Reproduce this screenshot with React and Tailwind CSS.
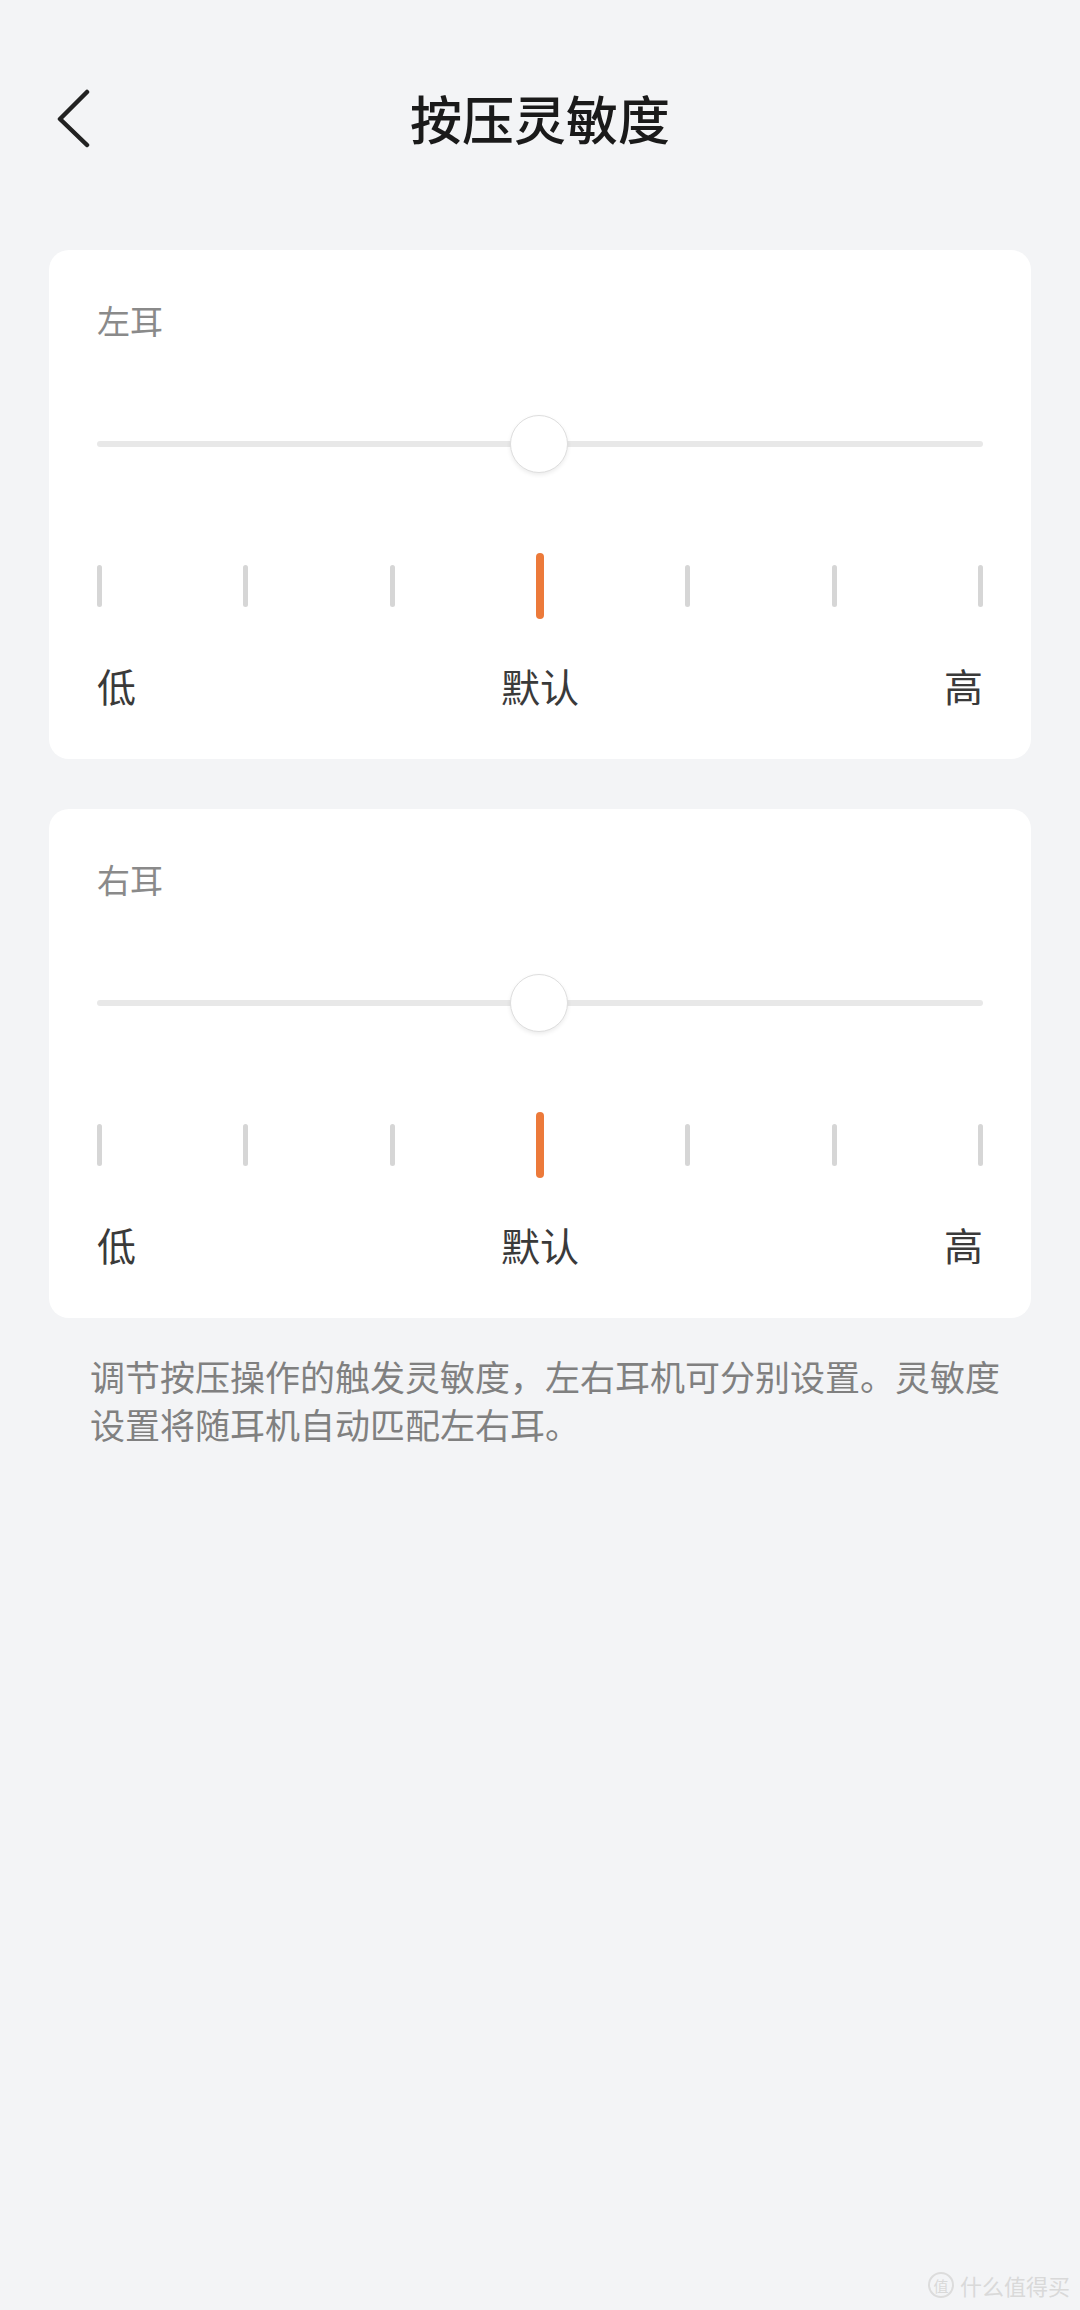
const font = { fontFamily: '"Noto Sans CJK SC", "Noto Sans", sans-serif' };

function BackIcon() {
  return (
    <svg width="40" height="60" viewBox="0 0 40 60" fill="none">
      <path
        d="M32 4 L5 31 L32 57"
        stroke="#222"
        strokeWidth="4.5"
        strokeLinecap="round"
        strokeLinejoin="round"
      />
    </svg>
  );
}

function EarCard({ label }) {
  const ticks = [0, 1, 2, 3, 4, 5, 6];
  const current = 3;

  return (
    <div className="bg-white rounded-[20px] px-[48px] pt-[50px] pb-[51px]">
      <p className="text-[33px] leading-[40px] text-[#8a8a8a]">{label}</p>

      {/* Slider */}
      <div className="relative mt-[75px] h-[58px] flex items-center">
        <div className="w-full h-[6px] rounded-full bg-[#e8e8e8]" />
        <div className="absolute left-[413px] top-0 w-[58px] h-[58px] rounded-full bg-white border border-[#dedede] shadow-[0_2px_4px_rgba(0,0,0,0.08)]" />
      </div>

      {/* Ticks */}
      <div className="mt-[80px] h-[66px] flex items-center justify-between">
        {ticks.map((t) =>
          t === current ? (
            <div key={t} className="w-[8px] h-[66px] rounded-full bg-[#ec7a3a]" />
          ) : (
            <div key={t} className="w-[5px] h-[42px] rounded-full bg-[#d6d6d6]" />
          )
        )}
      </div>

      {/* Labels */}
      <div className="mt-[43px] flex items-center justify-between text-[39px] leading-[46px] text-[#3a3a3a]">
        <span>低</span>
        <span>默认</span>
        <span>高</span>
      </div>
    </div>
  );
}

export default function App() {
  return (
    <div className="relative min-h-[2310px] w-[1080px] bg-[#f3f4f6]" style={font}>
      {/* Header */}
      <div className="pt-[64px]">
        <div className="h-[108px] grid grid-cols-[1fr_auto_1fr] items-center">
          <div className="pl-[55px] flex items-center">
            <BackIcon />
          </div>
          <h1 className="text-[52px] leading-[60px] font-medium text-[#1a1a1a]">
            按压灵敏度
          </h1>
          <div />
        </div>
      </div>

      {/* Content */}
      <div className="px-[49px] mt-[78px] flex flex-col gap-[50px]">
        <EarCard label="左耳" />
        <EarCard label="右耳" />
      </div>

      <p className="mt-[34px] pl-[90px] pr-[69px] text-[35px] leading-[48px] text-[#808080]">
        调节按压操作的触发灵敏度，左右耳机可分别设置。灵敏度设置将随耳机自动匹配左右耳。
      </p>

      {/* Watermark */}
      <div className="absolute right-[10px] bottom-[12px] flex items-center gap-[6px] text-[#d9d9d9]">
        <span className="w-[26px] h-[26px] rounded-full border-2 border-[#dcdcdc] flex items-center justify-center text-[15px] leading-none">
          值
        </span>
        <span className="text-[22px] leading-none">什么值得买</span>
      </div>
    </div>
  );
}
